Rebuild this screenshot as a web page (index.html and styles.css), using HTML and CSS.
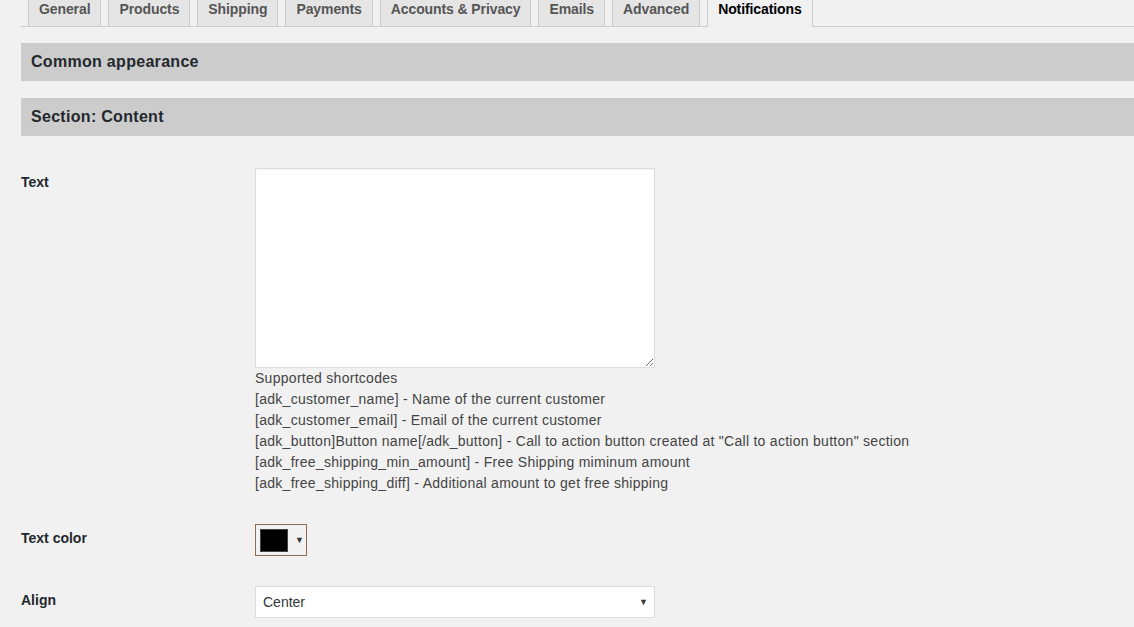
FILE: index.html
```html
<!DOCTYPE html>
<html lang="en">
<head>
<meta charset="utf-8">
<title>Notifications settings</title>
<link rel="stylesheet" href="styles.css">
</head>
<body>
<div class="wrap">
  <nav class="tabs">
    <a class="tab">General</a>
    <a class="tab">Products</a>
    <a class="tab">Shipping</a>
    <a class="tab">Payments</a>
    <a class="tab">Accounts &amp; Privacy</a>
    <a class="tab">Emails</a>
    <a class="tab">Advanced</a>
    <a class="tab tab-active">Notifications</a>
  </nav>

  <h2 class="section-head first">Common appearance</h2>
  <h2 class="section-head">Section: Content</h2>

  <div class="form">
    <div class="label">Text</div>
    <div class="field">
      <textarea class="textarea"></textarea>
      <div class="desc">
        <div>Supported shortcodes</div>
        <div>[adk_customer_name] - Name of the current customer</div>
        <div>[adk_customer_email] - Email of the current customer</div>
        <div>[adk_button]Button name[/adk_button] - Call to action button created at "Call to action button" section</div>
        <div>[adk_free_shipping_min_amount] - Free Shipping miminum amount</div>
        <div>[adk_free_shipping_diff] - Additional amount to get free shipping</div>
      </div>
    </div>

    <div class="label">Text color</div>
    <div class="field">
      <div class="picker">
        <span class="swatch"></span>
        <span class="picker-arrow">▼</span>
      </div>
    </div>

    <div class="label">Align</div>
    <div class="field">
      <div class="select-wrap">
        <div class="select">
          <span>Center</span>
          <span class="select-arrow">▼</span>
        </div>
        <div class="shadow"></div>
      </div>
    </div>
  </div>
</div>
</body>
</html>
```

FILE: styles.css
```css
html, body {
  margin: 0;
  padding: 0;
  background: #f1f1f1;
  font-family: "Liberation Sans", Arial, sans-serif;
  color: #23282d;
  overflow: hidden;
}

.wrap {
  padding-left: 21px;
}

.tabs {
  display: flex;
  align-items: flex-end;
  margin-top: -6px;
  border-bottom: 1px solid #ccc;
  padding-left: 7px;
  gap: 7px;
}

.tab {
  display: block;
  border: 1px solid #ccc;
  border-bottom: none;
  background: #e5e5e5;
  color: #555;
  font-weight: bold;
  font-size: 14px;
  letter-spacing: -0.1px;
  line-height: 24px;
  padding: 2px 10px 5px;
  white-space: nowrap;
}

.tab-active {
  background: #f1f1f1;
  color: #000;
  margin-bottom: -1px;
  padding-bottom: 6px;
}

.section-head {
  margin: 16px 0 0;
  background: #ccc;
  height: 38px;
  line-height: 38px;
  padding-left: 10px;
  font-size: 16px;
  font-weight: bold;
  letter-spacing: 0.3px;
  color: #23282d;
}

.section-head + .section-head {
  margin-top: 17px;
}

.form {
  display: grid;
  grid-template-columns: 234px 1fr;
  row-gap: 30px;
  margin-top: 32px;
}

.label {
  font-size: 14px;
  font-weight: bold;
  line-height: 20px;
  padding-top: 4px;
  color: #23282d;
}

.textarea {
  display: block;
  box-sizing: border-box;
  width: 400px;
  height: 200px;
  margin: 0;
  border: 1px solid #ddd;
  background: #fff;
  box-shadow: inset 0 1px 2px rgba(0, 0, 0, 0.05);
  font: 14px "Liberation Sans", Arial, sans-serif;
}

.desc {
  font-size: 14px;
  line-height: 21px;
  letter-spacing: 0.28px;
  color: #444;
}

.picker {
  box-sizing: border-box;
  width: 52px;
  height: 32px;
  border: 1px solid #8d6e55;
  display: flex;
  align-items: center;
  padding-left: 4px;
  gap: 7px;
  background: #f1f1f1;
}

.swatch {
  box-sizing: border-box;
  width: 28px;
  height: 23px;
  background: #000;
  border: 1px solid #444;
}

.picker-arrow {
  font-size: 9px;
  color: #333;
}

.select-wrap {
  position: relative;
  width: 400px;
}

.select {
  position: relative;
  z-index: 1;
  box-sizing: border-box;
  width: 400px;
  height: 32px;
  border: 1px solid #ddd;
  background: #fff;
  display: flex;
  align-items: center;
  justify-content: space-between;
  padding: 0 6px 0 7px;
  font-size: 14px;
  color: #32373c;
}

.select-arrow {
  font-size: 9px;
  color: #333;
}

.shadow {
  position: absolute;
  left: 125px;
  top: 35px;
  width: 285px;
  height: 12px;
  border-radius: 6px;
  box-shadow: 0 -1px 4px rgba(0, 0, 0, 0.07);
  background: #ebebeb;
}
```
